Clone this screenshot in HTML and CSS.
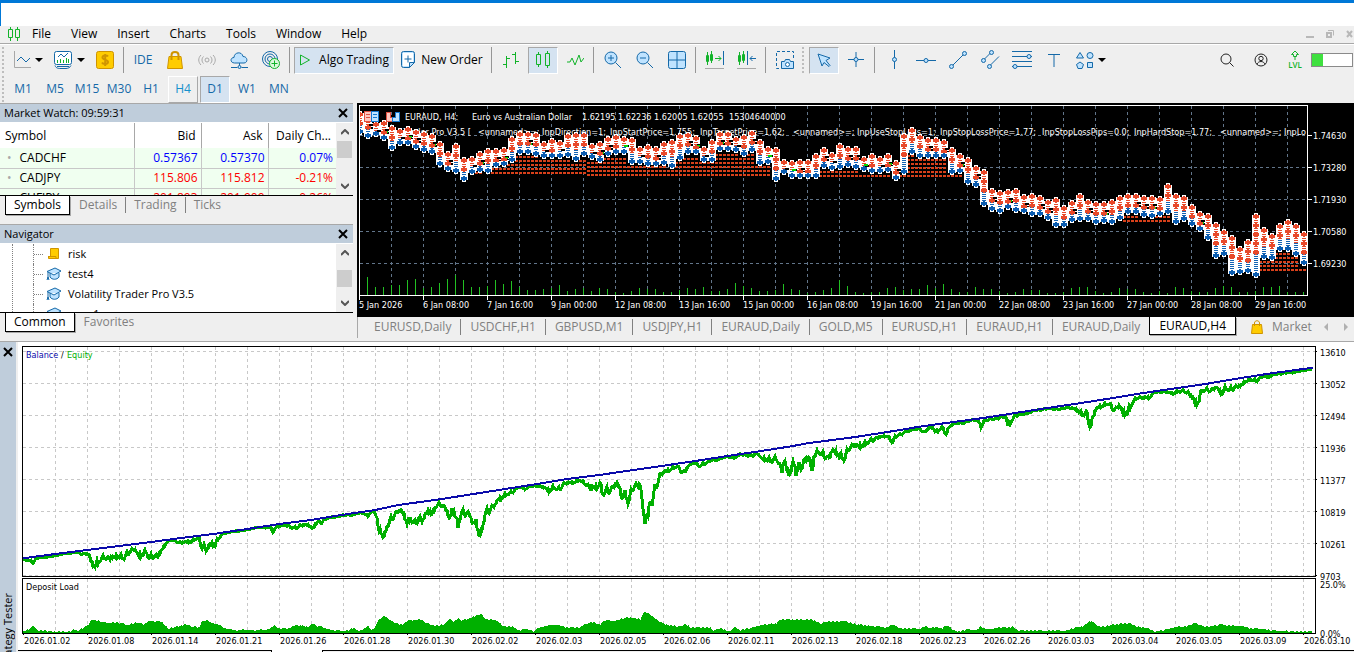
FILE: index.html
```html
<!DOCTYPE html>
<html lang="en">
<head>
    <meta charset="UTF-8">
    <meta name="viewport" content="width=device-width, initial-scale=1.0">
    <title>Trading Terminal</title>
    <link rel="stylesheet" href="styles.css">
</head>
<body>
    <header class="titlebar"></header>

    <nav class="menubar">
        <svg class="logo" width="12" height="14" viewBox="0 0 12 14"><path d="M2.5 0v2M2.5 11v3M9.5 0v2M9.5 11v3M.5 2.5h4v8h-4zM7.5 2.5h4v8h-4z"/></svg>
        <div class="menu-items">
            <button>File</button>
            <button>View</button>
            <button>Insert</button>
            <button>Charts</button>
            <button>Tools</button>
            <button>Window</button>
            <button>Help</button>
        </div>
        <div class="window-buttons">
            <button aria-label="Minimize"><svg width="8" height="8" viewBox="0 0 8 8"><path d="M0 7h8" stroke-width="2"/></svg></button>
            <button aria-label="Restore"><svg width="8" height="8" viewBox="0 0 8 8"><path d="M1 3h4v4H1z" stroke-width="2"/><path d="M2 .5h5.500v5"/></svg></button>
            <button aria-label="Close"><svg width="8" height="8" viewBox="0 0 8 8"><path d="M1 1l5 6M6 1L1 7" stroke-width="2"/></svg></button>
        </div>
    </nav>

    <div class="toolbar">
        <div class="toolrow">
            <span class="grip"></span>
            <button class="tool drop" aria-label="Line studies"><svg width="18" height="18" viewBox="0 0 18 18"><path class="gray" d="M1.500 0v16.500H18"/><path d="M4 10l4-4 5 5 4-4"/></svg></button>
            <button class="tool drop second" aria-label="Indicators"><svg width="20" height="20" viewBox="0 0 20 20"><rect class="white" x="1.500" y="1.500" width="17" height="13" rx="2"/><path d="M2 15.500c1 3 4 3 5 3h6c2 0 4-1 5-3M4 16.500h12M5 7l3-3 3 3 4-4"/><path class="green" d="M4.500 10v3M7.500 9v4M10.500 10v3M13.500 8v5M15.500 9v4"/></svg></button>
            <button class="tool" aria-label="Symbols"><svg width="18" height="18" viewBox="0 0 18 18"><rect class="gold" x=".5" y=".5" width="17" height="17" rx="2"/><path class="goldline" d="M12 5.500C11 4 6.500 4 6.500 6.500S12 8.500 12 11s-5 2.500-6 .5M9.200 3v12" stroke-width="2"/></svg></button>
            <span class="sep"></span>
            <button class="tool ide">IDE</button>
            <button class="tool" aria-label="Market"><svg width="16" height="18" viewBox="0 0 16 18"><path class="gold" d="M2 5.500h12l1.500 12H.5z"/><path class="goldline" d="M4.500 9V4c0-4 7-4 7 0v5" stroke-width="2"/></svg></button>
            <button class="tool" aria-label="Signals"><svg class="gray" width="18" height="16" viewBox="0 0 18 16"><circle cx="9" cy="8" r="2"/><path d="M5.500 4.500c-2 2-2 5 0 7M12.500 4.500c2 2 2 5 0 7M3 3c-3 3-3 7 0 10M15 3c3 3 3 7 0 10"/></svg></button>
            <button class="tool" aria-label="Hosting"><svg width="18" height="18" viewBox="0 0 18 18"><path class="light" d="M4.500 12C0 12 0 6.500 4 6.500 4 1 12 0 13 5.500c5 0 5 6.500 1 6.500z"/><path d="M9.500 12v3M1 16.500h6.500M11.500 16.500H18"/><circle class="light" cx="9.500" cy="16" r="1.500"/></svg></button>
            <button class="tool" aria-label="Add account"><svg width="20" height="20" viewBox="0 0 20 20"><circle cx="9" cy="9" r="7.500"/><circle cx="9" cy="9" r="5"/><circle cx="9" cy="9" r="2.500"/><circle class="greenlight" cx="13.500" cy="13.500" r="5"/><path class="green" d="M13.500 10.500v6M10.500 13.500h6"/></svg></button>
            <span class="sep"></span>
            <button class="tool labeled algo active"><svg class="green" width="12" height="14" viewBox="0 0 12 14"><path d="M1.500 2l9 5-9 5z"/></svg>Algo Trading</button>
            <button class="tool labeled order"><svg width="14" height="18" viewBox="0 0 14 18"><path class="light" d="M.5 2.500a2 2 0 0 1 2-2h9a2 2 0 0 1 2 2v9l-5 5h-6a2 2 0 0 1-2-2z"/><path class="white" d="M2 2h10v10H9v3H2z" stroke="none"/><path d="M13.500 11.500h-5v5M7 4.500v7M3.500 8h7"/></svg>New Order</button>
            <span class="sep"></span>
            <button class="tool" aria-label="Bar chart"><svg class="green" width="18" height="18" viewBox="0 0 18 18"><path d="M4.500 5v12M1 13.500h3.500M4.500 7.500H8M13.500 1v12M10 3.500h3.500M13.500 10.500H17"/></svg></button>
            <button class="tool active" aria-label="Candlesticks"><svg class="green" width="16" height="18" viewBox="0 0 16 18"><path d="M3.500 1v2M3.500 14v2M12.500 0v2M12.500 15v2M1.500 3.500h4v10h-4zM10.500 2.500h4v12h-4z"/></svg></button>
            <button class="tool" aria-label="Line chart"><svg class="green" width="18" height="12" viewBox="0 0 18 12"><path d="M1 8h3l2-4 3 7 4-10 2 7 3-4"/></svg></button>
            <span class="sep"></span>
            <button class="tool" aria-label="Zoom in"><svg width="18" height="18" viewBox="0 0 18 18"><circle class="light" cx="7" cy="7" r="6"/><path d="M7 4v6M4 7h6M11.500 11.500L17 17"/></svg></button>
            <button class="tool" aria-label="Zoom out"><svg width="18" height="18" viewBox="0 0 18 18"><circle class="light" cx="7" cy="7" r="6"/><path d="M4 7h6M11.500 11.500L17 17"/></svg></button>
            <button class="tool" aria-label="Tile windows"><svg width="18" height="18" viewBox="0 0 18 18"><rect class="light" x=".5" y=".5" width="17" height="17" rx="2"/><path d="M9 1v16M1 9h16"/></svg></button>
            <span class="sep"></span>
            <button class="tool" aria-label="Scroll to end"><svg width="20" height="18" viewBox="0 0 20 18"><path class="green" d="M2.500 1v13M6.500 0v12M1.500 4.500h2v6h-2zM5.500 3.500h2v6h-2zM10 7.500h6M13.500 5L16 7.500 13.500 10"/><path d="M18.500 0v14"/><path class="gray" d="M0 17.500h19"/></svg></button>
            <button class="tool" aria-label="Shift chart"><svg width="20" height="18" viewBox="0 0 20 18"><path class="green" d="M2.500 1v13M6.500 0v12M1.500 4.500h2v6h-2zM5.500 3.500h2v6h-2z"/><path d="M10.500 0v14M13 7.500h6M15.500 5L13 7.500l2.500 2.500"/><path class="gray" d="M0 17.500h19"/></svg></button>
            <span class="sep"></span>
            <button class="tool" aria-label="Screenshot"><svg width="20" height="20" viewBox="0 0 20 20"><path stroke-dasharray="3 2" d="M4 18.500H1.500v-17h17V9"/><path class="light" d="M6.500 11.500h3l1-2h4l1 2h3v7h-12z"/><circle class="white" cx="12.500" cy="14.500" r="2"/></svg></button>
            <span class="grip"></span>
            <button class="tool active" aria-label="Cursor"><svg width="16" height="16" viewBox="0 0 16 16"><path class="light" d="M2 2l12 4-4 2.500 4 5-1 1-5-4L6 14z"/></svg></button>
            <button class="tool" aria-label="Crosshair"><svg width="18" height="18" viewBox="0 0 18 18"><path d="M9 1v15M1 8.500h16"/><circle class="light" cx="9" cy="8.500" r="2"/></svg></button>
            <span class="sep"></span>
            <button class="tool" aria-label="Vertical line"><svg width="18" height="20" viewBox="0 0 18 20"><path d="M9.500 0v19"/><circle class="light" cx="9.500" cy="9.500" r="2"/></svg></button>
            <button class="tool" aria-label="Horizontal line"><svg width="20" height="18" viewBox="0 0 20 18"><path d="M0 9.500h20"/><circle class="light" cx="10" cy="9.500" r="2"/></svg></button>
            <button class="tool" aria-label="Trend line"><svg width="20" height="20" viewBox="0 0 20 20"><path d="M3 17L17 3"/><circle class="light" cx="3.500" cy="16.500" r="2"/><circle class="light" cx="16.500" cy="3.500" r="2"/></svg></button>
            <button class="tool" aria-label="Channel"><svg width="20" height="20" viewBox="0 0 20 20"><path d="M3 10.500l8-8M9 16.500l10-10"/><circle class="light" cx="3.500" cy="10.500" r="2"/><circle class="light" cx="11.500" cy="2.500" r="2"/><circle class="light" cx="9.500" cy="16.500" r="2"/></svg></button>
            <button class="tool" aria-label="Fibonacci"><svg width="20" height="20" viewBox="0 0 20 20"><path d="M0 1.500h20M0 6.500h20M0 11.500h20M0 16.500h20"/><circle class="light" cx="17" cy="6.500" r="2"/><circle class="light" cx="3" cy="16.500" r="2"/></svg></button>
            <button class="tool" aria-label="Text"><svg width="14" height="16" viewBox="0 0 14 16"><path d="M1 2.500h12M7 2.500V15"/></svg></button>
            <button class="tool drop shapes" aria-label="Objects"><svg width="18" height="18" viewBox="0 0 18 18"><path class="light" d="M4 1.500L7.500 7h-7z"/><circle class="light" cx="14" cy="4.500" r="3"/><path class="light" d="M4 11l3.500 2.500-1.500 4H2L.5 13.500zM11.500 11.500h5v5h-5z"/></svg></button>
            <div class="status-tools">
                <button class="tool dark" aria-label="Search"><svg width="14" height="14" viewBox="0 0 14 14"><circle cx="6" cy="6" r="5"/><path d="M9.500 9.500L13.500 13.500"/></svg></button>
                <button class="tool dark" aria-label="Account"><svg width="14" height="14" viewBox="0 0 14 14"><circle cx="7" cy="7" r="6"/><circle cx="7" cy="5.500" r="2.200"/><path d="M3 11.500c1-4 7-4 8 0"/></svg></button>
                <button class="tool lvl"><svg class="green" width="10" height="10" viewBox="0 0 10 10"><path d="M5 1l3.500 3.500h-2v2h-3v-2h-2zM5 6v4"/></svg>LVL</button>
                <span class="meter"></span>
            </div>
        </div>
        <div class="toolrow">
            <span class="grip"></span>
            <button class="tool">M1</button>
            <button class="tool">M5</button>
            <button class="tool">M15</button>
            <button class="tool">M30</button>
            <button class="tool">H1</button>
            <button class="tool raised">H4</button>
            <button class="tool active">D1</button>
            <button class="tool">W1</button>
            <button class="tool">MN</button>
        </div>
    </div>

    <main class="workspace">
        <aside class="side">
            <section class="panel watch">
                <div class="panel-title"><h2>Market Watch: 09:59:31</h2><button class="close" aria-label="Close Market Watch"><svg width="10" height="10" viewBox="0 0 10 10"><path d="M1 1l8 8M9 1L1 9"/></svg></button></div>
                <div class="panel-body">
                    <table>
                        <thead>
                            <tr><th>Symbol</th><th>Bid</th><th>Ask</th><th>Daily Ch...</th></tr>
                        </thead>
                        <tbody>
                            <tr class="up"><td>CADCHF</td><td>0.57367</td><td>0.57370</td><td>0.07%</td></tr>
                            <tr class="down"><td>CADJPY</td><td>115.806</td><td>115.812</td><td>-0.21%</td></tr>
                            <tr class="down"><td>CHFJPY</td><td>201.893</td><td>201.909</td><td>-0.26%</td></tr>
                        </tbody>
                    </table>
                    <div class="scroll">
                        <button aria-label="Scroll up"><svg width="8" height="6" viewBox="0 0 8 6"><path d="M0 5l4-4 4 4"/></svg></button>
                        <span class="thumb"></span>
                        <button aria-label="Scroll down"><svg width="8" height="6" viewBox="0 0 8 6"><path d="M0 1l4 4 4-4"/></svg></button>
                    </div>
                </div>
                <div class="tabs">
                    <button class="tab selected">Symbols</button>
                    <button class="tab">Details</button>
                    <button class="tab">Trading</button>
                    <button class="tab">Ticks</button>
                </div>
            </section>

            <section class="panel navigator">
                <div class="panel-title"><h2>Navigator</h2><button class="close" aria-label="Close Navigator"><svg width="10" height="10" viewBox="0 0 10 10"><path d="M1 1l8 8M9 1L1 9"/></svg></button></div>
                <div class="panel-body">
                    <ul class="tree">
                        <li><svg width="16" height="14" viewBox="0 0 16 14"><path class="gold" d="M4.500 1.500h8v10h-10v-2h2z"/><path class="goldline" d="M2 9.500h8v2.500"/></svg>risk</li>
                        <li><svg width="16" height="14" viewBox="0 0 16 14"><path class="light" d="M4 6v4c2 3 7 3 9 0V6M1 4.500L9 1l6 3-7 4zM2 5v6M1 13l1-3 1 3"/></svg>test4</li>
                        <li><svg width="16" height="14" viewBox="0 0 16 14"><path class="light" d="M4 6v4c2 3 7 3 9 0V6M1 4.500L9 1l6 3-7 4zM2 5v6M1 13l1-3 1 3"/></svg>Volatility Trader Pro V3.5</li>
                        <li><svg width="16" height="14" viewBox="0 0 16 14"><path class="light" d="M4 6v4c2 3 7 3 9 0V6M1 4.500L9 1l6 3-7 4z"/></svg>expo1</li>
                    </ul>
                    <div class="scroll">
                        <button aria-label="Scroll up"><svg width="8" height="6" viewBox="0 0 8 6"><path d="M0 5l4-4 4 4"/></svg></button>
                        <span class="thumb"></span>
                        <button aria-label="Scroll down"><svg width="8" height="6" viewBox="0 0 8 6"><path d="M0 1l4 4 4-4"/></svg></button>
                    </div>
                </div>
                <div class="tabs">
                    <button class="tab selected">Common</button>
                    <button class="tab">Favorites</button>
                </div>
            </section>
        </aside>

        <section class="charts">
            <svg id="priceChart" class="price-chart" viewBox="357 103 997 214"></svg>
            <div class="tabs chart-tabs">
                <button class="tab">EURUSD,Daily</button>
                <button class="tab">USDCHF,H1</button>
                <button class="tab">GBPUSD,M1</button>
                <button class="tab">USDJPY,H1</button>
                <button class="tab">EURAUD,Daily</button>
                <button class="tab">GOLD,M5</button>
                <button class="tab">EURUSD,H1</button>
                <button class="tab">EURAUD,H1</button>
                <button class="tab">EURAUD,Daily</button>
                <button class="tab selected">EURAUD,H4</button>
                <button class="tab market"><svg width="12" height="14" viewBox="0 0 12 14"><path class="gold" d="M1.500 4.500h9l1 9H.5z"/><path class="goldline" d="M3.500 6V3c0-3 5-3 5 0v3"/></svg>Market</button>
                <div class="tab-arrows">
                    <button aria-label="Previous"><svg width="4" height="8" viewBox="0 0 4 8"><path d="M4 0v8L0 4z"/></svg></button>
                    <button aria-label="Next"><svg width="4" height="8" viewBox="0 0 4 8"><path d="M0 0v8l4-4z"/></svg></button>
                </div>
            </div>
        </section>
    </main>

    <section class="tester">
        <aside class="tester-bar">
            <button class="close" aria-label="Close Strategy Tester"><svg width="10" height="10" viewBox="0 0 10 10"><path d="M1 1l8 8M9 1L1 9"/></svg></button>
            <h2>Strategy Tester</h2>
        </aside>
        <div class="tester-body">
            <svg id="testerChart" class="tester-chart" viewBox="18 342 1336 308"></svg>
            <div class="tester-tabs"><span></span><span></span></div>
        </div>
    </section>

    <script src="charts.js"></script>
</body>
</html>
```

FILE: styles.css
```css
* {
    box-sizing: border-box;
}
body {
    margin: 0;
    padding-right: 4px;
    height: 100vh;
    overflow: hidden;
    display: flex;
    flex-direction: column;
    background-color: #fff;
    font-family: 'Open Sans', 'Noto Sans', sans-serif;
    font-size: 12px;
    line-height: 16px;
    color: #000;
}
button {
    padding: 0;
    border: none;
    background: none;
    font: inherit;
    color: inherit;
}
h2 {
    margin: 0;
    font-size: 12px;
    font-weight: normal;
}
svg {
    display: block;
    flex: none;
    fill: none;
    stroke: #1569a8;
}
.light { fill: #bfe3ff; }
.white { fill: #fff; }
.green { stroke: #12b32a; }
.greenlight { fill: #dcf8dc; stroke: #12b32a; }
.gray { stroke: #a8a8a8; }
.gold { fill: #ffcc00; stroke: #cf9400; }
.goldline { stroke: #cf9400; }

.titlebar {
    flex: none;
    height: 26px;
    border-top: 3px solid #0078d7;
    border-left: 1px solid #0078d7;
}

/* menu */
.menubar {
    flex: none;
    display: flex;
    align-items: center;
    height: 18px;
    padding: 0 0 2px 8px;
    background-color: #efefef;
    border-bottom: 1px solid #a8a8a8;
}
.logo {
    stroke: #12b32a;
}
.menu-items {
    display: flex;
    gap: 20px;
    padding-left: 12px;
}
.window-buttons {
    display: flex;
    gap: 12px;
    margin-left: auto;
}
.window-buttons svg {
    stroke: #b8b8b8;
}

/* toolbar */
.toolbar {
    flex: none;
    height: 59px;
    padding-top: 1px;
    background-color: #efefef;
    border-top: 1px solid #fff;
}
.toolrow {
    display: flex;
    align-items: center;
    gap: 2px;
    height: 28px;
}
.toolrow + .toolrow {
    margin-top: 1px;
}
.grip {
    width: 4px;
    height: 26px;
    margin-left: 2px;
    border-left: 2px dotted #bdbdbd;
}
.toolrow .tool ~ .grip {
    margin-left: 0;
    width: 5px;
}
.sep {
    width: 4px;
    height: 26px;
    background: linear-gradient(90deg, transparent 1px, #969696 1px, #969696 2px, transparent 2px);
}
.tool {
    flex: none;
    display: flex;
    align-items: center;
    justify-content: center;
    width: 30px;
    height: 27px;
    border: 1px solid transparent;
    color: #1569a8;
}
.tool.active {
    background-color: #d5e3f1;
    border-color: #a8a8a8 #fff #fff #a8a8a8;
}
.tool.raised {
    color: #1590cc;
    border-color: #fff #a8a8a8 #a8a8a8 #fff;
}
.drop {
    width: 40px;
    gap: 4px;
}
.drop::after {
    content: '';
    border: 4px solid transparent;
    border-top-color: #000;
    border-bottom: none;
}
.drop.second {
    width: 38px;
}
.labeled {
    gap: 8px;
    color: #000;
}
.algo {
    width: 100px;
}
.order {
    width: 92px;
    gap: 6px;
}
.status-tools {
    display: flex;
    align-items: center;
    gap: 4px;
    margin-left: auto;
    padding-right: 1px;
}
.status-tools svg {
    margin: 0 auto;
}
.dark svg {
    stroke: #222;
}
.lvl {
    display: block;
    font-size: 8px;
    font-weight: 600;
    line-height: 10px;
    color: #12b32a;
}
.meter {
    width: 42px;
    height: 14px;
    margin-left: -3px;
    border: 1px solid #8a8a8a;
    background: linear-gradient(90deg, #3fe03f 11px, #fff 11px);
}

/* left panels */
.workspace {
    flex: none;
    display: flex;
    gap: 4px;
    height: 239px;
    background-color: #efefef;
    border-bottom: 1px solid #a8a8a8;
}
.side {
    flex: none;
    display: flex;
    flex-direction: column;
    gap: 8px;
    width: 353px;
}
.panel-title {
    display: flex;
    align-items: center;
    justify-content: space-between;
    height: 19px;
    padding: 0 5px 0 4px;
    background-color: #bfcddb;
    border-top: 1px solid #a8a8a8;
}
.panel-title h2, .tree {
    font-size: 11px;
}
.close svg {
    stroke: #000;
    stroke-width: 2;
}
.panel-body {
    display: flex;
    overflow: hidden;
    padding-top: 1px;
    background-color: #fff;
    border-bottom: 1px solid #000;
}
.watch .panel-body {
    height: 74px;
}
.navigator .panel-body {
    height: 70px;
}
.panel table {
    width: 336px;
    align-self: flex-start;
    table-layout: fixed;
    border-collapse: collapse;
}
th, td {
    height: 20px;
    padding: 0 3px;
    text-align: right;
    border-right: 1px solid #c8c8c8;
}
th {
    width: 67px;
    height: 25px;
    padding: 0 5px;
    font-weight: normal;
    border-color: #a8a8a8;
}
th:first-child, td:first-child {
    width: 134px;
    text-align: left;
}
th:last-child, td:last-child {
    width: auto;
    border-right: none;
}
td {
    background-color: #f0fff0;
    border-bottom: 1px solid #c8c8c8;
}
td:first-child {
    color: #000;
}
td:first-child::before {
    content: '•';
    margin: 0 8px 0 4px;
    color: #a8a8a8;
}
.up { color: #0000ff; }
.down { color: #ff0000; }
.scroll {
    display: flex;
    flex-direction: column;
    align-items: center;
    width: 17px;
    background-color: #efefef;
}
.scroll button {
    height: 18px;
}
.scroll svg {
    stroke: #555;
    stroke-width: 2;
}
.scroll .thumb {
    width: 15px;
    height: 17px;
    margin-bottom: auto;
    background-color: #cdcdcd;
}
.navigator .thumb {
    margin-top: 8px;
}
.tree {
    flex: 1;
    margin: 0 0 0 12px;
    padding: 0 0 0 20px;
    list-style: none;
    border-left: 1px dotted #808080;
}
.tree li {
    display: flex;
    align-items: center;
    gap: 6px;
    height: 20px;
    border-left: 1px dotted #808080;
}
.tree li::before {
    content: '';
    width: 9px;
    margin-right: -3px;
    border-top: 1px dotted #808080;
}
.tabs {
    display: flex;
    align-items: flex-start;
    height: 20px;
    padding-left: 5px;
}
.tab {
    flex: none;
    height: 16px;
    margin-top: 1px;
    padding: 0 8px;
    color: #808080;
    border-left: 1px solid #808080;
}
.tab:first-child, .selected + .tab {
    border-left-color: transparent;
}
.tab.selected {
    height: 19px;
    margin-top: 0;
    background-color: #fff;
    color: #000;
    border: 1px solid #000;
    border-top: none;
    box-shadow: 1px 1px #a8a8a8;
}

/* charts */
.charts {
    flex: 1;
    min-width: 0;
}
.price-chart, .tester-chart {
    width: 100%;
    height: auto;
    font-size: 9px;
    font-family: 'DejaVu Sans Condensed', 'Open Sans', sans-serif;
    shape-rendering: crispEdges;
}
.price-chart {
    background-color: #000;
}
.price-chart text {
    fill: #fff;
    stroke: none;
}
.price-chart .frame {
    stroke: #fff;
}
.price-chart .grid {
    stroke: #62758a;
    stroke-dasharray: 3 3;
}
.volume { stroke: #22c022; }
.band { stroke: #d8401a; stroke-width: 2; stroke-dasharray: 3 1; }
.outline { stroke: #fff; stroke-width: 8; }
.cap { stroke: #fff; stroke-width: 4; }
.sell { stroke: #e8492a; stroke-width: 4; stroke-dasharray: 1 1; }
.buy { stroke: #1464b4; stroke-width: 4; stroke-dasharray: 1 1; }
.gap { stroke: #000; stroke-width: 4; stroke-dasharray: 2 1; }
.tick { stroke: #00d800; stroke-width: 4; }
.sell-arrow { fill: #e8492a; stroke: none; }
.buy-arrow { fill: #0a5cb0; stroke: none; }
.mark-red { fill: #ffc8c0; stroke: #e05040; }
.mark-blue { fill: #bfe3ff; stroke: #1478d0; }
.chart-tabs {
    height: 21px;
    padding-left: 6px;
    border-left: 1px solid #a8a8a8;
}
.chart-tabs .tab {
    margin-top: 2px;
    padding: 0 9px;
}
.chart-tabs .tab.selected {
    height: 18px;
    margin-top: 0;
}
.chart-tabs .market {
    display: flex;
    align-items: center;
    gap: 9px;
    padding-left: 14px;
}
.tab-arrows {
    display: flex;
    align-items: center;
    gap: 16px;
    height: 20px;
    margin-left: auto;
    padding-right: 6px;
}
.tab-arrows svg {
    fill: #b0b0b0;
    stroke: none;
}

/* strategy tester */
.tester {
    flex: 1;
    display: flex;
    min-height: 0;
    overflow: hidden;
}
.tester-bar {
    flex: none;
    width: 18px;
    background-color: #bfcddb;
    border-right: 2px solid #efefef;
}
.tester-bar .close {
    display: block;
    margin: 5px 0 0 3px;
}
.tester-bar h2 {
    margin-top: 236px;
    font-size: 11px;
    writing-mode: vertical-rl;
    transform: rotate(180deg);
    white-space: nowrap;
}
.tester-body {
    flex: 1;
    min-width: 0;
}
.tester-chart .grid {
    stroke: #c8c8c8;
    stroke-dasharray: 3 3;
}
.tester-chart .frame {
    stroke: #000;
}
.tester-chart text {
    fill: #000;
    stroke: none;
}
.tester-chart .balance-label { fill: #0a0aaa; }
.tester-chart .equity-label { fill: #00b000; }
.balance { stroke: #0a0aaa; stroke-width: 2; }
.equity { stroke: #00b000; stroke-width: 3; }
.load { fill: #00b000; stroke: none; }
.tester-tabs {
    display: flex;
    justify-content: space-between;
    gap: 50px;
    height: 2px;
}
.tester-tabs span {
    width: 254px;
    background-color: #efefef;
    border-top: 1px solid #000;
    border-right: 1px solid #000;
}
.tester-tabs span:last-child {
    flex: 1;
    border-right: none;
    border-left: 1px solid #000;
}
```

FILE: charts.js
```js
// top and bottom of the deal markers of every bar, in thirds of a pixel
const deals = [
    [32,105],[45,118],[62,110],[60,122],[75,152],[85,137],[77,137],[88,150],[94,158],[100,165],
    [122,200],[152,215],[128,222],[172,246],[168,225],[152,218],[143,222],[143,205],[140,200],[108,190],
    [92,165],[92,165],[95,170],[122,178],[115,178],[120,178],[100,175],[97,185],[97,172],[128,180],
    [122,188],[108,172],[103,165],[108,165],[112,195],[138,195],[132,200],[137,200],[122,198],[118,208],
    [100,182],[97,165],[106,165],[137,188],[118,188],[92,155],[92,155],[108,160],[103,170],[90,160],
    [118,198],[138,195],[142,245],[178,225],[180,236],[176,236],[176,236],[158,236],[142,208],[155,213],
    [130,210],[137,205],[137,210],[167,217],[160,222],[167,222],[160,218],[180,242],[100,226],[82,165],
    [102,178],[112,178],[112,178],[118,178],[140,226],[158,222],[170,256],[195,265],[208,320],[265,335],
    [270,343],[268,330],[265,338],[283,343],[278,350],[284,350],[298,362],[292,384],[316,384],[300,370],
    [278,365],[298,365],[304,376],[304,372],[298,376],[286,364],[278,345],[278,345],[286,353],[286,358],
    [288,350],[248,345],[278,375],[286,365],[312,382],[333,396],[340,424],[365,478],[388,470],[405,528],
    [438,525],[418,522],[340,535],[382,480],[400,484],[368,455],[358,455],[368,470],[392,498]
];
const volumes = [
    4,18,8,8,10,10,15,16,7,8,12,16,20,15,8,8,9,15,11,14,8,5,5,6,7,10,4,6,7,4,
    7,6,3,2,4,7,6,6,3,3,5,7,6,8,4,4,6,12,9,7,4,4,5,11,6,5,2,3,5,7,
    15,9,3,2,3,3,7,8,5,6,6,10,7,11,6,3,3,8,6,6,4,2,3,6,5,5,2,2,3,7,
    8,8,4,2,3,7,6,6,3,2,4,2,8,7,4,3,3,7,9,8,3,3,4,8,8,9,3,3,3
];
// open grid levels: first bar, last bar, lowest line
const bands = [[13, 28, 173], [29, 52, 175], [54, 67, 176], [68, 76, 176], [89, 103, 221], [113, 118, 270]];
const inputs = [
    [366, 'Volatility Trader Pro V3.5 ['], [478, '<unnamed>=;'], [542, 'InpDirection=1;'], [610, 'InpStartPrice=1.755;'],
    [700, 'InpTargetPrice=1.62;'], [793, '<unnamed>=;'], [857, 'InpUseStopLoss=1;'], [940, 'InpStopLossPrice=1.77;'],
    [1042, 'InpStopLossPips=0.0;'], [1134, 'InpHardStop=1.77;'], [1220, '<unnamed>=;'], [1284, 'InpLo']
];

const price = document.getElementById('priceChart');
const tester = document.getElementById('testerChart');

function add(svg, tag, attrs, text) {
    const el = document.createElementNS('http://www.w3.org/2000/svg', tag);
    for (const key in attrs) el.setAttribute(key, attrs[key]);
    if (text) el.textContent = text;
    svg.appendChild(el);
    return el;
}
function line(svg, cls, d) {
    add(svg, 'path', { class: cls, d: d });
}

function drawPrice() {
    let grid = '';
    for (let x = 391; x < 1307; x += 32) grid += `M${x}.5 106V295`;
    for (let y = 135; y < 295; y += 32) grid += `M360 ${y}.5H1307`;
    line(price, 'grid', grid);

    let bars = '';
    volumes.forEach((v, i) => { bars += `M${359 + i * 8}.5 295v-${v}`; });
    line(price, 'volume', bars);

    const clip = add(price, 'clipPath', { id: 'plot' });
    add(clip, 'rect', { x: 359, y: 105, width: 948, height: 190 });
    const plot = add(price, 'g', { 'clip-path': 'url(#plot)' });
    inputs.forEach(([x, label]) => add(plot, 'text', { x: x, y: 135 }, label));

    bands.forEach(([from, to, low]) => {
        for (let i = from; i <= to; i++) {
            const x = 355 + i * 8;
            for (let y = low; y > 100 + deals[i][1] / 3; y -= 4) line(plot, 'band', `M${x} ${y}h8`);
        }
    });
    deals.forEach(([a, b], i) => {
        const x = 359.5 + i * 8;
        const top = Math.round(100 + a / 3);
        const bottom = Math.round(100 + b / 3);
        line(plot, 'outline', `M${x} ${top + 2}V${bottom - 2}`);
        line(plot, 'cap', `M${x} ${top}V${bottom}`);
    });
    deals.forEach(([a, b], i) => {
        const x = 359.5 + i * 8;
        const top = Math.round(100 + a / 3);
        const bottom = Math.round(100 + b / 3);
        const mid = Math.round(top + (bottom - top) * 0.6);
        line(plot, 'sell', `M${x} ${top + 7}V${mid}`);
        line(plot, 'buy', `M${x} ${mid}V${bottom - 6}`);
        if (i % 4 > 0 && bottom - top < 25) {
            line(plot, 'gap', `M${x + 3} ${top + 9}V${mid + 1}`);
            if (i % 3 === 0) line(plot, 'tick', `M${x + 2} ${mid - 2}v2`);
        }
        for (let y = top + 2; y < mid; y += 9) {
            add(plot, 'path', { class: 'sell-arrow', d: `M${x - 1} ${y - 1}h2v1h2v3h-2v1h-2v-1h-2v-3h2z` });
        }
        add(plot, 'path', { class: 'buy-arrow', d: `M${x - 1} ${bottom - 6}h2v1h2v3h-2v1h-2v-1h-2v-3h2z` });
    });

    add(price, 'path', { class: 'mark-red', d: 'M364.500 111.500h7v10h-7zM366 114.500h4M366 117.500h4' });
    add(price, 'path', { class: 'mark-blue', d: 'M371.500 111.500h7v10h-7zM373 114.500h4M373 117.500h4' });
    add(price, 'path', { class: 'mark-red', d: 'M386.500 112.500h4v5h4v4h-8z' });
    add(price, 'path', { class: 'mark-blue', d: 'M395.500 117.500v-5h4v9h-7v-4z' });
    add(price, 'text', { x: 405, y: 120 }, 'EURAUD, H4:');
    add(price, 'text', { x: 472, y: 120 }, 'Euro vs Australian Dollar');
    add(price, 'text', { x: 582, y: 120 }, '1.62195 1.62236 1.62005 1.62055');
    add(price, 'text', { x: 729, y: 120 }, '15304640000');

    line(price, 'frame', 'M359.500 105.500H1307.500V295.500H359.500z');
    ['1.74630', '1.73280', '1.71930', '1.70580', '1.69230'].forEach((label, i) => {
        line(price, 'frame', `M1307 ${135 + i * 32}.5h5`);
        add(price, 'text', { x: 1313, y: 139 + i * 32 }, label);
    });
    const dates = ['5 Jan 2026', '6 Jan 08:00', '7 Jan 16:00', '9 Jan 00:00', '12 Jan 08:00', '13 Jan 16:00', '15 Jan 00:00',
        '16 Jan 08:00', '19 Jan 16:00', '21 Jan 00:00', '22 Jan 08:00', '23 Jan 16:00', '27 Jan 00:00', '28 Jan 08:00', '29 Jan 16:00'];
    dates.forEach((label, i) => {
        line(price, 'frame', `M${359 + i * 64}.5 295v5`);
        add(price, 'text', { x: 359 + i * 64, y: 308 }, label);
    });
}

// each series is cut in three runs, x and y in thirds of a pixel from the run start
const balance = [
    [68,655,166,642,262,630,358,618,454,606,550,593,646,581,742,567,838,552,934,540,1030,524,1126,510,1190,496,1318,478],
    [0,473,160,448,256,433,352,417,448,405,544,391,640,377,736,363,832,348,928,334,1024,319,1072,310,1216,291,1312,276],
    [0,270,58,260,154,247,250,234,346,219,442,204,538,190,634,175,730,159,826,145,922,131,1018,115,1114,100,1210,87,1238,83]
];
const equity = [
    [68,657,85,660,98,667,110,656,140,650,180,644,205,640,230,636,250,642,266,645,276,672,288,672,300,658,315,650,325,660,340,658,
        355,645,370,652,385,638,395,630,405,632,415,652,428,640,438,632,450,655,460,645,470,655,480,645,490,625,500,605,515,600,530,605,
        545,610,560,608,575,602,590,594,598,595,605,622,612,620,620,638,630,615,645,612,655,595,665,582,690,577,720,572,745,568,780,562,
        810,562,820,573,830,562,855,555,875,560,885,564,900,558,935,556,937,572,945,550,955,545,965,548,975,538,1000,531,1045,524,
        1060,528,1070,519,1090,518,1103,528,1110,518,1122,515,1130,535,1135,570,1145,575,1153,592,1160,555,1175,535,1190,518,1205,515,
        1212,525,1222,545,1232,535,1245,548,1258,535,1268,548,1280,520,1290,510,1297,525,1305,500,1318,490,1330,500,1340,515,1348,548],
    [5,512,12,508,24,555,34,515,50,520,60,530,68,560,78,545,90,588,98,555,105,520,120,508,135,500,145,482,158,468,175,460,190,455,
        205,442,225,447,245,437,262,438,280,444,297,452,310,440,328,448,340,433,360,430,375,424,390,420,405,430,418,445,428,450,440,440,
        450,428,458,458,470,450,485,450,500,435,508,445,516,470,524,455,535,485,545,450,552,438,562,440,570,438,577,490,584,552,590,510,
        594,530,600,480,606,488,614,445,622,430,630,408,645,398,665,385,680,378,690,388,704,402,712,385,725,370,738,368,748,377,765,370,
        780,365,800,359,830,349,855,356,870,343,905,347,922,340,935,360,950,355,965,360,980,353,988,375,996,398,1003,365,1010,390,
        1018,402,1026,375,1034,365,1038,398,1046,375,1055,382,1065,362,1080,362,1086,400,1092,345,1104,332,1118,342,1130,350,1136,362,
        1146,338,1165,340,1184,355,1195,325,1210,318,1225,322,1240,312,1258,302,1275,298,1290,293,1310,286,1328,304,1342,283],
    [5,285,20,274,40,268,60,265,73,280,85,268,97,262,110,276,125,260,140,282,148,262,165,250,190,248,215,240,235,242,242,260,252,242,
        270,236,292,238,305,232,320,230,323,260,335,240,345,226,370,224,400,212,440,207,480,206,500,202,515,208,535,210,548,222,558,215,
        566,240,572,265,578,238,586,215,600,200,615,192,628,190,636,202,648,210,658,200,668,222,678,218,688,205,698,185,712,172,730,176,
        748,172,762,156,790,155,815,162,830,154,850,152,865,160,875,175,886,192,895,182,905,150,920,148,935,153,948,145,965,160,975,142,
        990,148,1005,142,1022,142,1035,125,1050,118,1070,122,1085,112,1105,112,1120,102,1150,100,1175,98,1200,92,1238,88]
];
const load = [
    [68,875,90,866,98,856,110,870,150,874,210,876,220,865,230,874,250,862,265,855,275,838,290,842,310,848,350,848,380,854,410,848,
        430,853,445,843,485,845,505,866,530,860,555,852,575,860,597,862,605,845,620,840,635,850,655,852,670,865,700,870,800,870,820,856,
        835,866,860,866,885,855,925,860,936,850,950,858,970,862,1000,872,1045,872,1058,863,1070,872,1090,868,1103,857,1112,868,1122,868,
        1132,845,1140,834,1153,828,1170,842,1205,855,1222,842,1260,838,1285,852,1315,858,1335,850,1347,836],
    [10,845,24,835,35,842,65,832,92,822,105,836,140,842,155,856,195,862,205,874,220,865,250,874,265,862,300,855,328,855,345,862,
        390,862,410,850,430,846,450,855,460,842,495,842,520,835,540,832,572,838,583,814,595,820,610,832,640,852,690,860,705,850,720,862,
        780,862,790,872,810,864,835,875,855,861,870,870,905,863,930,855,980,850,990,838,1020,838,1050,840,1085,838,1110,850,1140,843,
        1160,846,1185,843,1210,852,1260,858,1310,862,1328,854,1345,864],
    [0,864,60,866,75,858,90,865,110,860,125,866,140,855,155,868,175,875,200,868,230,870,242,858,255,868,290,864,340,860,350,870,
        400,872,500,872,520,864,550,858,572,842,590,856,610,860,650,852,690,850,710,860,740,864,765,875,790,870,820,862,855,860,885,848,
        910,860,940,858,965,852,990,858,1030,858,1050,866,1085,866,1120,872,1200,874,1238,874]
];

function points(runs) {
    const list = [];
    runs.forEach((run, n) => {
        for (let i = 0; i < run.length; i += 2) list.push([(run[i] + n * 1350) / 3, 340 + run[i + 1] / 3]);
    });
    return list;
}
function valueAt(list, x) {
    let i = 1;
    while (i < list.length - 1 && list[i][0] < x) i++;
    const [x0, y0] = list[i - 1];
    const [x1, y1] = list[i];
    return y0 + (y1 - y0) * (x - x0) / (x1 - x0);
}

function drawTester() {
    let grid = '';
    for (let x = 55; x < 1315; x += 32) grid += `M${x}.5 347V576M${x}.5 579V633`;
    for (let y = 351; y < 576; y += 32) grid += `M23 ${y}.5H1315`;
    line(tester, 'grid', grid);

    const b = points(balance);
    const e = points(equity);
    const l = points(load);

    // ticks wobble more the further equity falls below the balance
    let d = '';
    const wobble = [0, 1, -0.6, 0.5, -1, 0.8, -0.3, -0.8, 0.6];
    for (let x = 23; x <= 1312; x++) {
        const base = valueAt(e, x);
        const depth = Math.min(base - valueAt(b, x), 14);
        const y = base + wobble[(x * 7 + (x >> 3)) % 9] * (0.4 + Math.max(depth, 0) * 0.2);
        d += (d ? 'L' : 'M') + x + ' ' + y.toFixed(1);
    }
    line(tester, 'equity', d);
    line(tester, 'balance', 'M' + b.map(p => p.map(v => v.toFixed(1)).join(' ')).join('L'));

    let area = 'M23 633';
    for (let x = 23; x <= 1312; x++) area += `L${x} ${Math.round(valueAt(l, x) + wobble[(x >> 1) % 9] * 0.6)}`;
    add(tester, 'path', { class: 'load', d: area + 'V633z' });

    line(tester, 'frame', 'M22.500 346.500H1315.500V576.500H22.500zM22.500 578.500H1315.500V633.500H22.500z');
    add(tester, 'text', { x: 26, y: 358, class: 'balance-label' }, 'Balance');
    add(tester, 'text', { x: 61, y: 358 }, '/');
    add(tester, 'text', { x: 67, y: 358, class: 'equity-label' }, 'Equity');
    add(tester, 'text', { x: 26, y: 590 }, 'Deposit Load');

    ['13610', '13052', '12494', '11936', '11377', '10819', '10261', '9703'].forEach((label, i) => {
        line(tester, 'frame', `M1315 ${351 + i * 32}.5h2`);
        add(tester, 'text', { x: 1320, y: 356 + i * 32 }, label);
    });
    add(tester, 'text', { x: 1320, y: 588 }, '25.0%');
    add(tester, 'text', { x: 1320, y: 637 }, '0.0%');

    const dates = ['01.02', '01.08', '01.14', '01.21', '01.26', '01.28', '01.30', '02.02', '02.03', '02.05', '02.06',
        '02.11', '02.13', '02.18', '02.23', '02.26', '03.03', '03.04', '03.05', '03.09', '03.10'];
    dates.forEach((label, i) => {
        line(tester, 'frame', `M${23 + i * 64}.5 633v2`);
        add(tester, 'text', { x: 24 + i * 64, y: 644 }, '2026.' + label);
    });
}

drawPrice();
drawTester();
```
